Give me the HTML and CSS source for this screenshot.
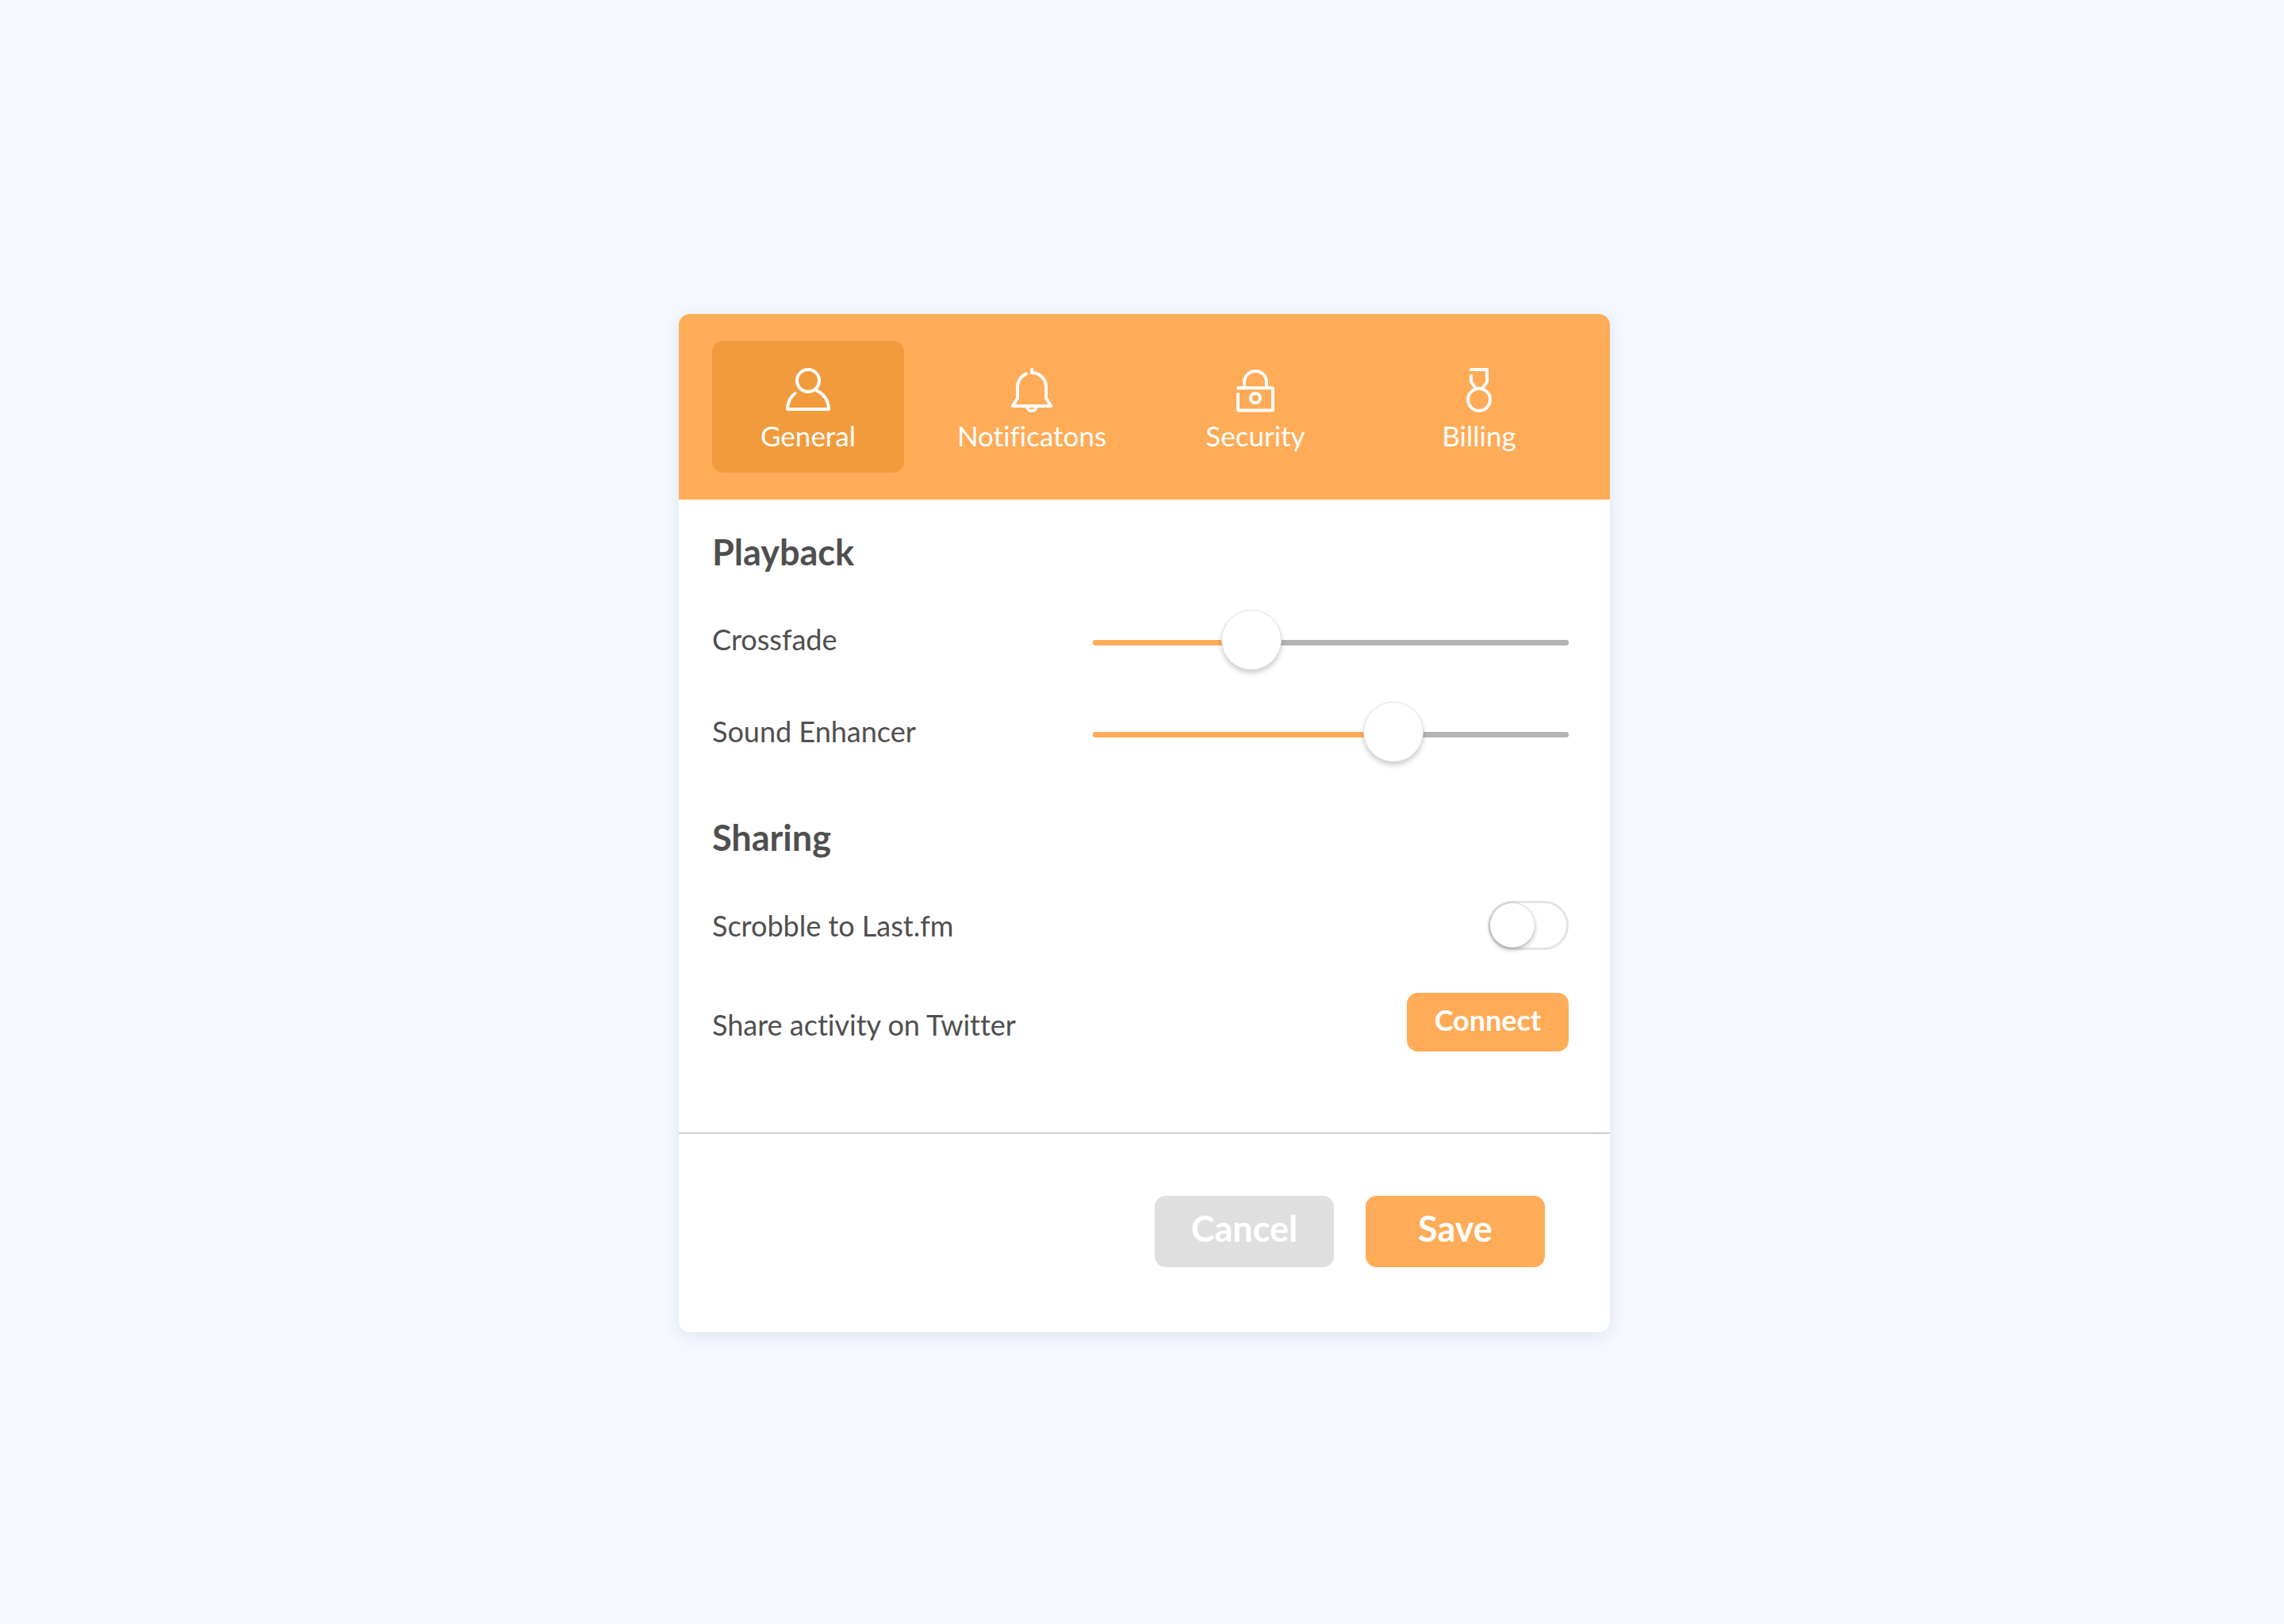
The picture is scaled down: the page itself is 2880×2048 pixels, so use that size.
FILE: index.html
```html
<!DOCTYPE html>
<html lang="en">
<head>
  <meta charset="utf-8">
  <meta name="viewport" content="width=device-width, initial-scale=1">
  <title>Settings</title>
  <link rel="stylesheet" href="styles.css">
</head>
<body>
  <main class="page">
    <form class="card">
      <nav class="tabs" role="tablist">
        <button class="tab tab--active" type="button" role="tab" aria-selected="true">
          <svg class="tab__icon" viewBox="0 0 56 56" aria-hidden="true">
            <circle cx="28" cy="16" r="14"/>
            <path d="M11.5 32A26 26 0 0 0 2 52H54A26 26 0 0 0 38.5 28.3"/>
          </svg>
          General
        </button>
        <button class="tab" type="button" role="tab" aria-selected="false">
          <svg class="tab__icon" viewBox="0 0 56 56" aria-hidden="true">
            <path d="M28 2V6A18 18 0 0 1 46 24V38L52 48H4L10 38V24A18 18 0 0 1 21 7.4"/>
            <path d="M22 48A6 6 0 0 0 34 48"/>
          </svg>
          Notificatons
        </button>
        <button class="tab" type="button" role="tab" aria-selected="false">
          <svg class="tab__icon" viewBox="0 0 56 56" aria-hidden="true">
            <path d="M6 25.3H50V53.5H6V33"/>
            <path d="M14 25V18A14 14 0 0 1 42 18V25"/>
            <circle cx="28" cy="38" r="6"/>
          </svg>
          Security
        </button>
        <button class="tab" type="button" role="tab" aria-selected="false">
          <svg class="tab__icon" viewBox="0 0 56 56" aria-hidden="true">
            <path d="M18 2H38V17.7L32 26M18 10V17.7L24 26"/>
            <circle cx="28" cy="40" r="14"/>
          </svg>
          Billing
        </button>
      </nav>

      <div class="content">
        <section class="group group--sliders">
          <h2 class="group__title">Playback</h2>
          <div class="row">
            <label class="row__label" for="crossfade">Crossfade</label>
            <input class="slider" id="crossfade" type="range" min="0" max="100" step="1" value="31" style="--value: 31">
          </div>
          <div class="row">
            <label class="row__label" for="enhancer">Sound Enhancer</label>
            <input class="slider" id="enhancer" type="range" min="0" max="100" step="1" value="65" style="--value: 65">
          </div>
        </section>

        <section class="group group--sharing">
          <h2 class="group__title">Sharing</h2>
          <div class="row">
            <label class="row__label" for="scrobble">Scrobble to Last.fm</label>
            <input class="switch" id="scrobble" type="checkbox" role="switch">
          </div>
          <div class="row">
            <label class="row__label" for="twitter">Share activity on Twitter</label>
            <button class="button button--small" id="twitter" type="button">Connect</button>
          </div>
        </section>
      </div>

      <footer class="actions">
        <button class="button button--muted" type="reset">Cancel</button>
        <button class="button" type="submit">Save</button>
      </footer>
    </form>
  </main>
</body>
</html>
```

FILE: styles.css
```css
:root {
  --accent: #ffab57;
  --accent-dark: #f29b3c;
  --track: #b4b4b4;
  --text: #4f4f4f;
  --radius: 14px;
}

*,
*::before {
  box-sizing: border-box;
}

body {
  margin: 0;
  background: #f5f8ff;
  color: var(--text);
  font: 400 36px/44px Lato, "Open Sans", sans-serif;
  font-variant-ligatures: none;
}

button {
  border: 0;
  font: inherit;
  cursor: pointer;
}

.page {
  display: grid;
  align-items: center;
  justify-items: center;
  min-height: 100vh;
  padding: 28px 0 0 6px;
}

.card {
  width: 100%;
  max-width: 1174px;
  overflow: hidden;
  border-radius: var(--radius);
  background: #fff;
  box-shadow: 0 4px 20px rgba(40, 50, 90, 0.1);
}

/* Tabs */

.tabs {
  display: grid;
  grid-template-columns: repeat(4, 1fr);
  gap: 40px;
  padding: 34px 44px 34px 42px;
  background: var(--accent);
}

.tab {
  display: flex;
  flex-direction: column;
  align-items: center;
  gap: 7px;
  padding: 34px 0 25px;
  border-radius: var(--radius);
  background: none;
  color: #fff;
  font-size: 35px;
}

.tab--active {
  background: var(--accent-dark);
}

.tab__icon {
  width: 56px;
  height: 56px;
  overflow: visible;
  fill: none;
  stroke: currentColor;
  stroke-width: 4;
  stroke-linecap: round;
  stroke-linejoin: round;
}

/* Settings */

.content {
  display: grid;
  gap: 64px;
  padding: 40px 52px 96px 42px;
}

.group {
  display: grid;
}

.group--sliders {
  row-gap: 36px;
}

.group--sharing {
  row-gap: 46px;
}

.group__title {
  margin: 0 0 12px;
  font-size: 45px;
  font-weight: 700;
  line-height: 52px;
}

.group--sharing .group__title {
  margin-bottom: 0;
}

.row {
  display: flex;
  align-items: center;
  justify-content: space-between;
  min-height: 80px;
}

.group--sharing .row:first-of-type {
  min-height: 78px;
}

.group--sliders .row__label {
  padding-bottom: 8px;
}

.slider {
  flex: 0 1 600px;
  height: 80px;
  margin: 0;
  appearance: none;
  background: none;
}

.slider::-webkit-slider-runnable-track {
  height: 7px;
  border-radius: 3px;
  background:
    linear-gradient(var(--accent), var(--accent)) 0 0 / calc(38px + (100% - 76px) * var(--value) / 100) 100% no-repeat,
    var(--track);
}

.slider::-webkit-slider-thumb {
  width: 76px;
  height: 76px;
  margin-top: -38px;
  appearance: none;
  border: 1px solid #e2e2e2;
  border-radius: 50%;
  background: #fff;
  box-shadow: 0 4px 6px rgba(0, 0, 0, 0.2);
}

.switch {
  width: 102px;
  height: 62px;
  margin: 0;
  appearance: none;
  border: 3px solid #e5e5e5;
  border-radius: 31px;
  background: #fff;
}

.switch::before {
  content: "";
  display: block;
  width: 56px;
  height: 56px;
  border-radius: 50%;
  background: #fff;
  box-shadow: 0 0 1px 1px rgba(0, 0, 0, 0.1), 0 3px 6px rgba(0, 0, 0, 0.25);
}

.switch:checked::before {
  margin-left: auto;
}

/* Buttons */

.button {
  width: 226px;
  height: 90px;
  padding: 0 0 8px;
  border-radius: var(--radius);
  background: var(--accent);
  color: #fff;
  font-size: 45px;
  font-weight: 700;
}

.button--small {
  align-self: flex-start;
  width: 204px;
  height: 74px;
  padding-bottom: 6px;
  font-size: 36px;
}

.button--muted {
  background: #dfdfdf;
}

.actions {
  display: flex;
  justify-content: flex-end;
  gap: 40px;
  padding: 78px 82px 82px;
  border-top: 2px solid #cdcdcd;
}
```
